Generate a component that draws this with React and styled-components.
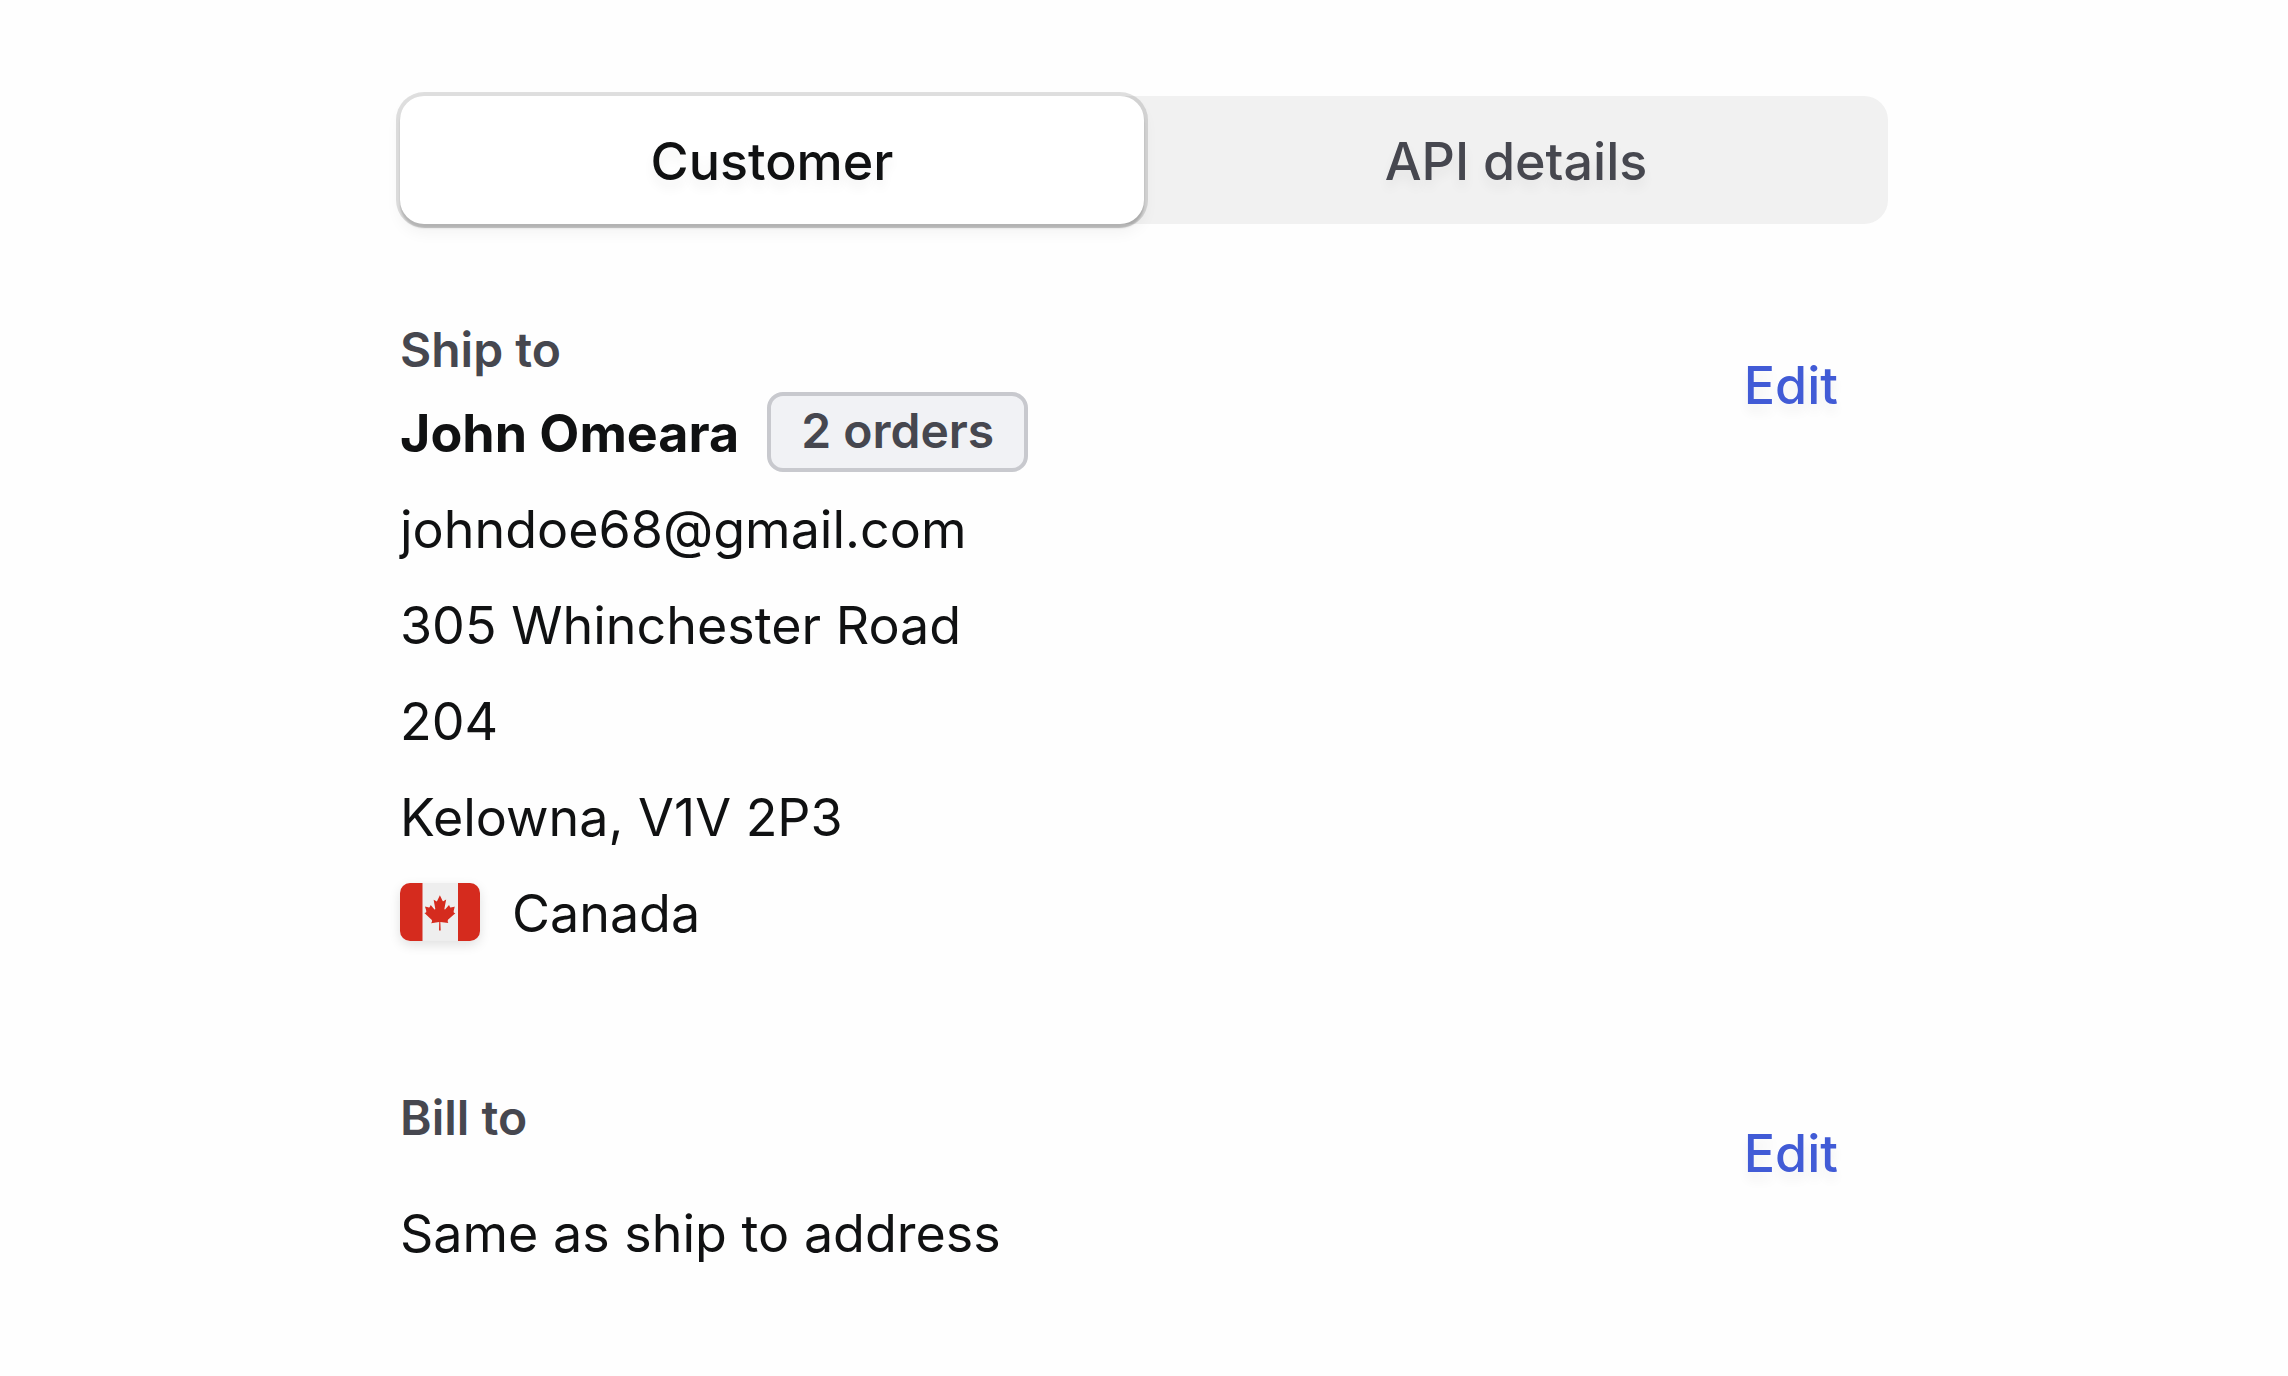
import React, { useState } from "react";
import styled, { createGlobalStyle } from "styled-components";

const GlobalStyle = createGlobalStyle`
  *, *::before, *::after {
    box-sizing: border-box;
  }

  body {
    margin: 0;
    background: #fefefe;
    color: #101112;
    font-family: Inter, "Liberation Sans", sans-serif;
    -webkit-font-smoothing: antialiased;
  }
`;

const Page = styled.main`
  max-width: 1552px;
  margin: 0 auto;
  padding: 96px 32px;
`;

const TabList = styled.div`
  display: grid;
  grid-template-columns: 1fr 1fr;
  border-radius: 24px;
  background: #f1f1f1;
`;

const Tab = styled.button`
  height: 128px;
  padding: 4px 32px 0;
  border: 0;
  border-radius: 24px;
  background: ${({ $active }) => ($active ? "#fff" : "transparent")};
  box-shadow: ${({ $active }) =>
    $active
      ? "0 0 0 4px rgba(0, 0, 0, 0.12), 0 4px 2px rgba(0, 0, 0, 0.16), 0 8px 16px rgba(0, 0, 0, 0.05)"
      : "none"};
  color: ${({ $active }) => ($active ? "#101112" : "#46474f")};
  font: inherit;
  font-size: 52px;
  font-weight: 500;
  line-height: 64px;
  text-shadow: 0 8px 12px rgba(0, 0, 0, 0.06);
  cursor: pointer;
`;

const Sections = styled.div`
  display: grid;
  gap: 120px;
  padding-top: 90px;
`;

const Section = styled.section`
  display: flex;
  align-items: flex-start;
  justify-content: space-between;
`;

const Details = styled.div`
  display: flex;
  flex-direction: column;
  gap: ${({ $gap }) => $gap}px;
`;

const Label = styled.h2`
  margin: 0;
  color: #46474f;
  font-size: 48px;
  font-weight: 600;
  line-height: 72px;
`;

const Address = styled.address`
  font-size: 52px;
  font-style: normal;
  line-height: 96px;
`;

const Line = styled.div`
  display: flex;
  align-items: center;
  gap: ${({ $gap = 32 }) => $gap}px;
`;

const Name = styled.strong`
  font-weight: 700;
`;

const Badge = styled.span`
  margin-bottom: 4px;
  padding: 0 30px 2px;
  border: 4px solid #c8c9ce;
  border-radius: 16px;
  background: #f1f2f5;
  color: #46474f;
  font-size: 48px;
  font-weight: 600;
  line-height: 70px;
`;

const EditButton = styled.button`
  margin-top: 24px;
  padding: 0 50px;
  border: 0;
  background: none;
  color: #415bd6;
  font: inherit;
  font-size: 52px;
  font-weight: 500;
  line-height: 96px;
  text-shadow: 0 8px 12px rgba(0, 0, 0, 0.06);
  cursor: pointer;
`;

const FlagIcon = styled.svg`
  width: 80px;
  height: 58px;
  margin-bottom: 4px;
  border-radius: 10px;
  box-shadow: 0 4px 12px rgba(0, 0, 0, 0.12);
`;

function CanadaFlag() {
  return (
    <FlagIcon viewBox="0 0 80 58" aria-hidden="true">
      <path fill="#eee" d="M0 0h80v58H0z" />
      <path fill="#d52b1e" d="M0 0h22.5v58H0zM58 0h22v58H58z" />
      <path
        fill="#d52b1e"
        transform="translate(1.7 .1) scale(.121 .127)"
        d="M201 232l-13.3 4.4 61.4 54c4.7 13.7-1.6 17.8-5.6 25l66.6-8.4-1.6 67 13.9-.3-3.1-66.6 66.7 8c-4.1-8.7-7.8-13.3-4-27.2l61.3-51-10.7-4c-8.8-6.8 3.8-32.6 5.6-48.9 0 0-35.7 12.3-38 5.8l-9.2-17.5-32.6 35.8c-3.5.9-5-.5-5.9-3.5l15-74.8-23.8 13.4q-3.2 1.3-5.2-2.2l-23-46-23.6 47.8q-2.8 2.5-5 .7L264 130.8l13.7 74.1c-1.1 3-3.7 3.8-6.7 2.2l-31.2-35.3c-4 6.5-6.8 17.1-12.2 19.5s-23.5-4.5-35.6-7c4.2 14.8 17 39.6 9 47.7z"
      />
    </FlagIcon>
  );
}

const tabs = ["Customer", "API details"];

export default function App() {
  const [active, setActive] = useState(tabs[0]);

  return (
    <>
      <GlobalStyle />
      <Page>
        <TabList role="tablist">
          {tabs.map((tab) => (
            <Tab
              key={tab}
              type="button"
              role="tab"
              aria-selected={tab === active}
              $active={tab === active}
              onClick={() => setActive(tab)}
            >
              {tab}
            </Tab>
          ))}
        </TabList>
        <Sections>
          <Section>
            <Details $gap={0}>
              <Label>Ship to</Label>
              <Address>
                <Line $gap={28}>
                  <Name>John Omeara</Name>
                  <Badge>2 orders</Badge>
                </Line>
                <Line>johndoe68@gmail.com</Line>
                <Line>305 Whinchester Road</Line>
                <Line>204</Line>
                <Line>Kelowna, V1V 2P3</Line>
                <Line>
                  <CanadaFlag />
                  Canada
                </Line>
              </Address>
            </Details>
            <EditButton type="button">Edit</EditButton>
          </Section>
          <Section>
            <Details $gap={32}>
              <Label>Bill to</Label>
              <Address>
                <Line>Same as ship to address</Line>
              </Address>
            </Details>
            <EditButton type="button">Edit</EditButton>
          </Section>
        </Sections>
      </Page>
    </>
  );
}
